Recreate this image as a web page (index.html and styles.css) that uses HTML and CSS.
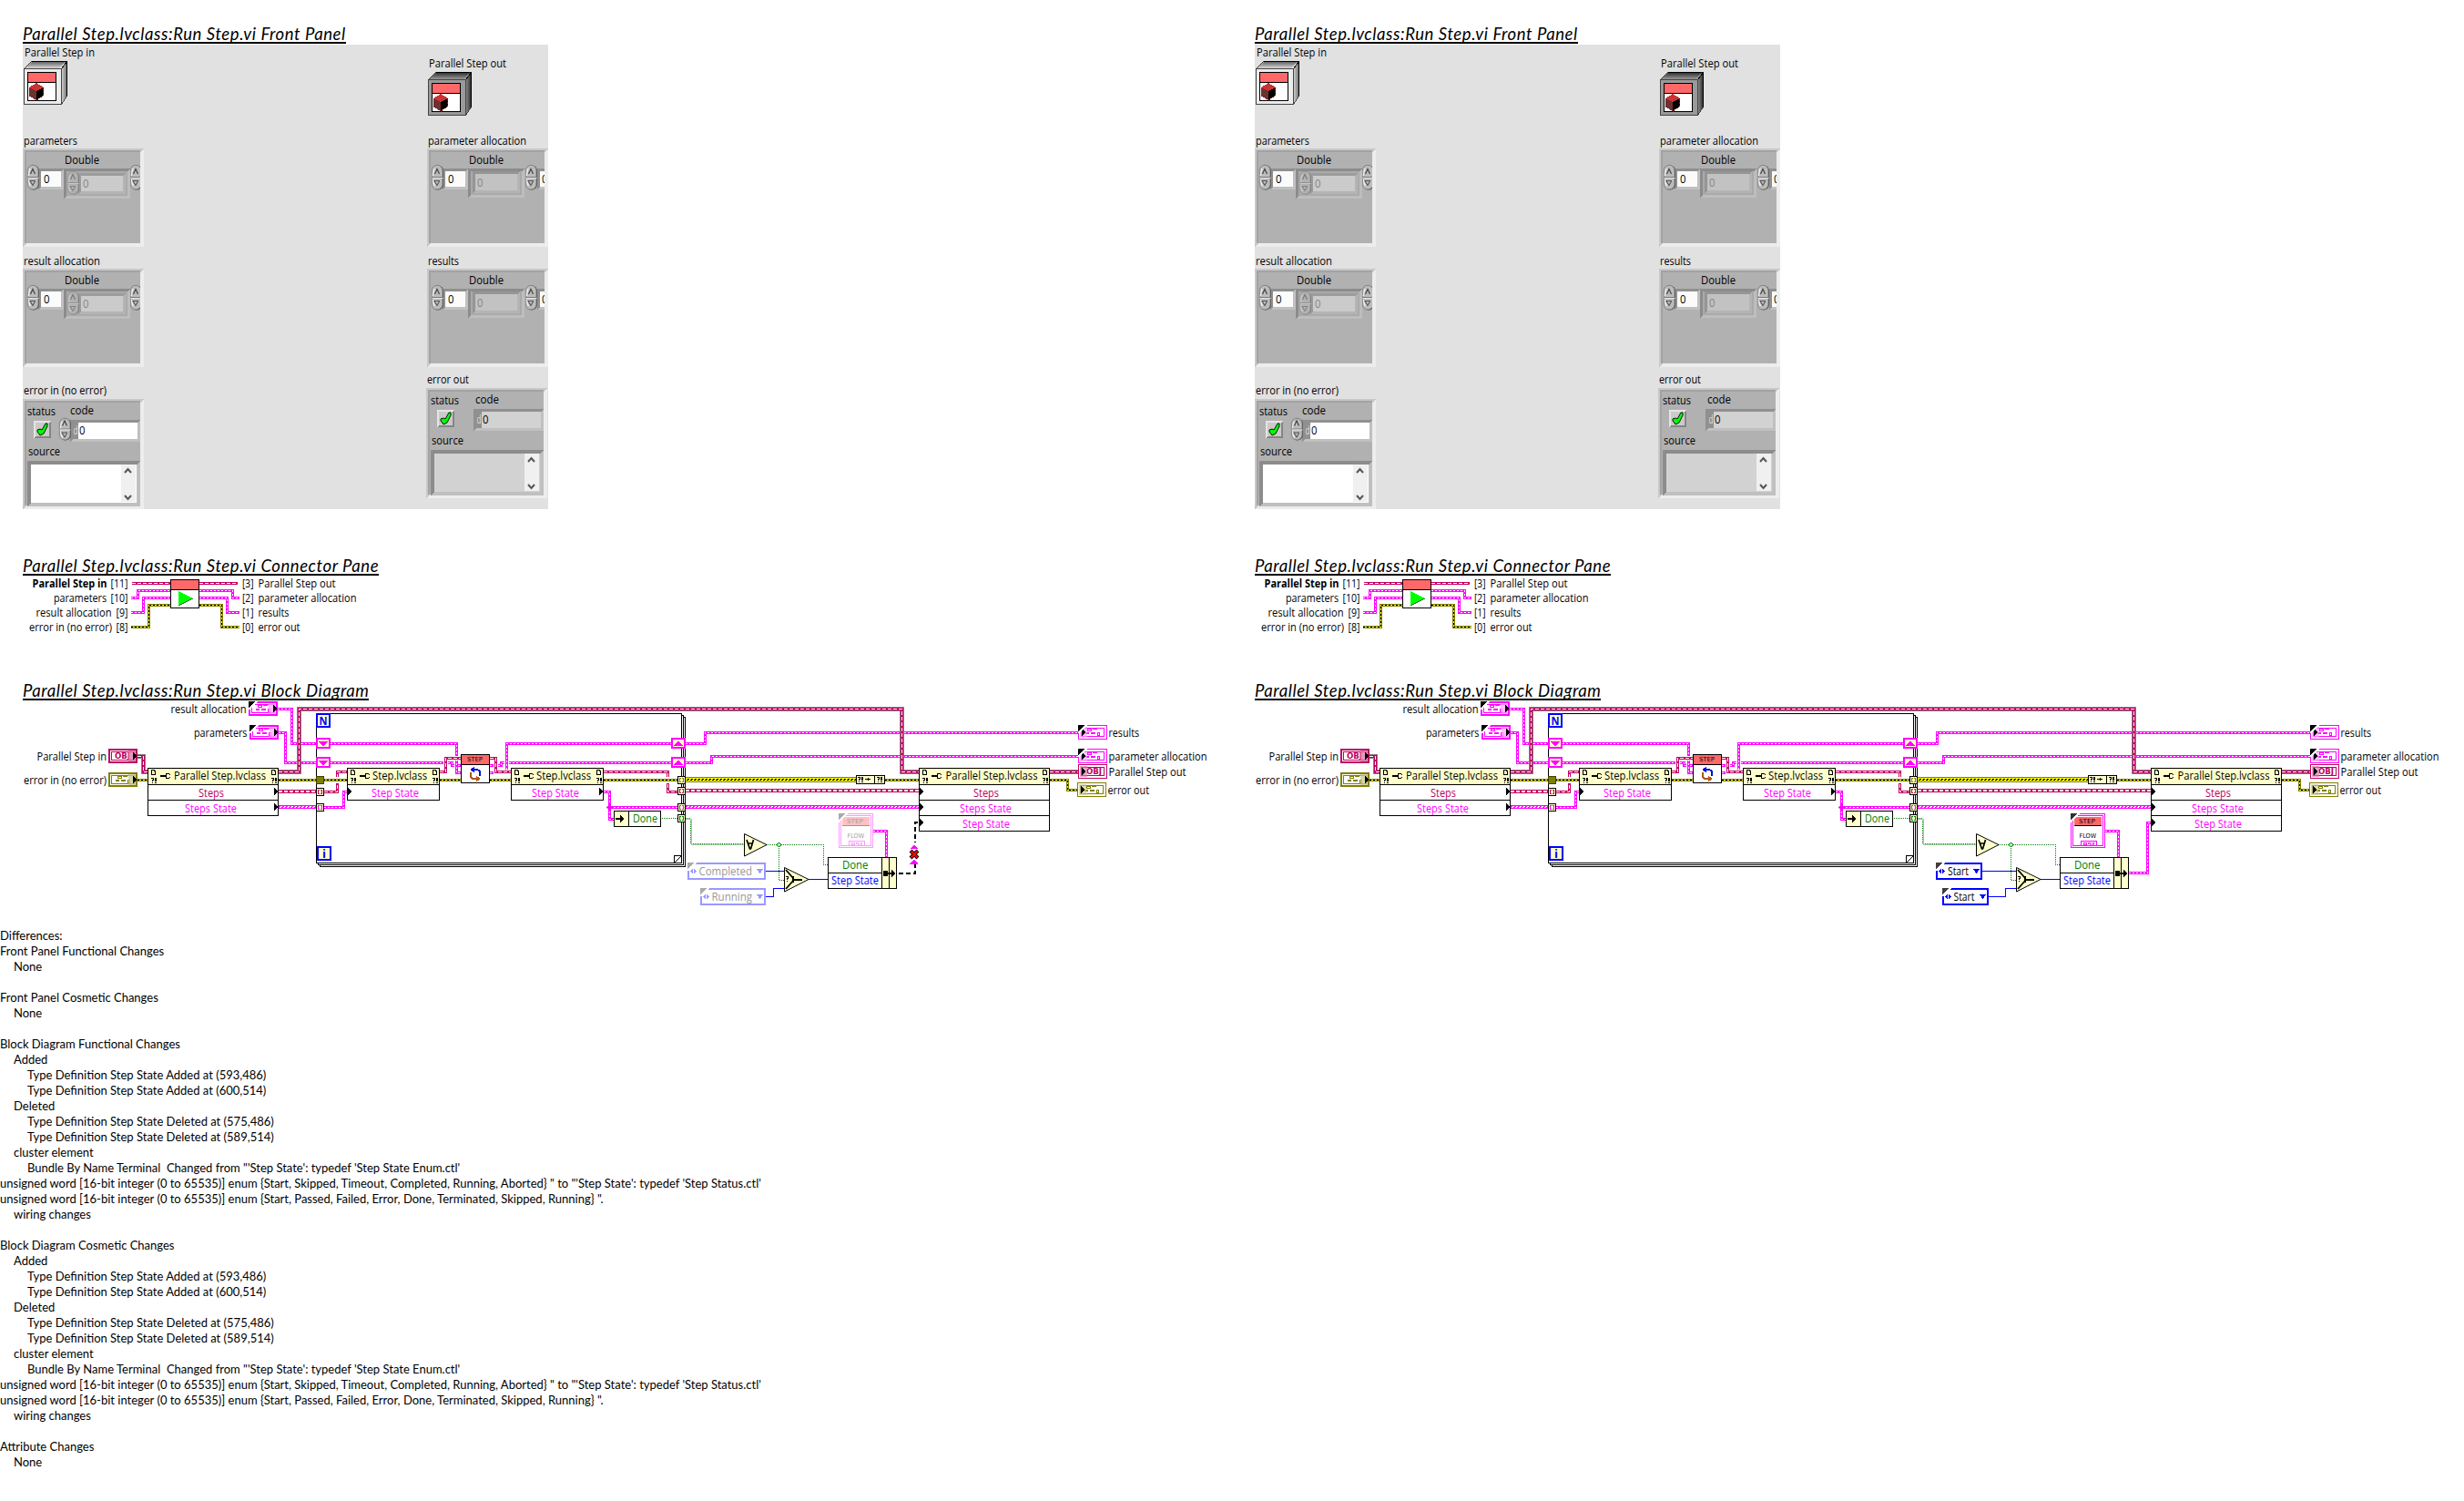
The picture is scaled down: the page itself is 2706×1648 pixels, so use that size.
FILE: index.html
```html
<!DOCTYPE html>
<html lang="en">
<head>
<meta charset="utf-8">
<title>VI comparison - Parallel Step.lvclass:Run Step.vi</title>
<link rel="stylesheet" href="styles.css">
</head>
<body>
<main class="compare">
  <section class="vi" data-version="before"></section>
  <section class="vi" data-version="after"></section>
</main>
<section class="differences">
  <p>Differences:</p>
  <p>Front Panel Functional Changes</p>
  <p class="l1">None</p>
  <p class="gap">Front Panel Cosmetic Changes</p>
  <p class="l1">None</p>
  <p class="gap">Block Diagram Functional Changes</p>
  <p class="l1">Added</p>
  <p class="l2">Type Definition Step State Added at (593,486)</p>
  <p class="l2">Type Definition Step State Added at (600,514)</p>
  <p class="l1">Deleted</p>
  <p class="l2">Type Definition Step State Deleted at (575,486)</p>
  <p class="l2">Type Definition Step State Deleted at (589,514)</p>
  <p class="l1">cluster element</p>
  <p class="l2">Bundle By Name Terminal  Changed from "'Step State': typedef 'Step State Enum.ctl'</p>
  <p>unsigned word [16-bit integer (0 to 65535)] enum {Start, Skipped, Timeout, Completed, Running, Aborted} " to "'Step State': typedef 'Step Status.ctl'</p>
  <p>unsigned word [16-bit integer (0 to 65535)] enum {Start, Passed, Failed, Error, Done, Terminated, Skipped, Running} ".</p>
  <p class="l1">wiring changes</p>
  <p class="gap">Block Diagram Cosmetic Changes</p>
  <p class="l1">Added</p>
  <p class="l2">Type Definition Step State Added at (593,486)</p>
  <p class="l2">Type Definition Step State Added at (600,514)</p>
  <p class="l1">Deleted</p>
  <p class="l2">Type Definition Step State Deleted at (575,486)</p>
  <p class="l2">Type Definition Step State Deleted at (589,514)</p>
  <p class="l1">cluster element</p>
  <p class="l2">Bundle By Name Terminal  Changed from "'Step State': typedef 'Step State Enum.ctl'</p>
  <p>unsigned word [16-bit integer (0 to 65535)] enum {Start, Skipped, Timeout, Completed, Running, Aborted} " to "'Step State': typedef 'Step Status.ctl'</p>
  <p>unsigned word [16-bit integer (0 to 65535)] enum {Start, Passed, Failed, Error, Done, Terminated, Skipped, Running} ".</p>
  <p class="l1">wiring changes</p>
  <p class="gap">Attribute Changes</p>
  <p class="l1">None</p>
</section>
<script src="script.js"></script>
</body>
</html>
```
FILE: styles.css
```css
body { margin: 0; background: #fff; color: #000; font-family: "Open Sans", "Noto Sans", sans-serif; font-size: 12px; }
.compare { display: grid; grid-template-columns: 1fr 1fr; height: 1019px; }
.vi { padding: 26px 0 0 25px; }
.vi h2 { margin: 0 0 1px; width: fit-content; height: 20px; border-bottom: 2px solid #000; font: italic 400 18.5px/22px Lato, sans-serif; white-space: nowrap; letter-spacing: 0.57px; }
.vi h2.connector-title { margin-top: 51px; }
.vi h2.diagram-title { margin-top: 40px; }
svg { display: block; shape-rendering: crispEdges; overflow: visible; }
svg text { font-family: "Open Sans", "Noto Sans", sans-serif; font-size: 12px; white-space: pre; }
svg .b { font-weight: 700; }
svg .tiny { font-family: "DejaVu Sans", sans-serif; font-size: 7px; }
svg .tinyb { font-family: "DejaVu Sans", sans-serif; font-size: 8px; font-weight: 700; }
.front-panel { display: flex; justify-content: space-between; width: 577px; height: 510px; background: #e1e1e1; }
.column { display: flex; flex-direction: column; }
.smooth { shape-rendering: auto; }
.clip { overflow: hidden; }
.w { fill: none; stroke-linejoin: miter; }
.w-pink { stroke: #f0f; stroke-width: 3; }
.w-pink-in { stroke: #fff; stroke-width: 1; stroke-dasharray: 2 2; }
.w-class { stroke: #808080; stroke-width: 5; }
.w-crim { stroke: #c00060; stroke-width: 3; }
.w-crim-in { stroke: #fff; stroke-width: 1; stroke-dasharray: 4 2; }
.w-err { stroke: #808000; stroke-width: 3; }
.w-err-y { stroke: #ff0; stroke-width: 1; }
.w-err-in { stroke: #000; stroke-width: 1; stroke-dasharray: 2 2; }
.w-crim-a { stroke: #c00060; stroke-width: 4; }
.w-crim-ain { stroke: #fff; stroke-width: 2; stroke-dasharray: 4 2; }
.w-bool { stroke: #008000; stroke-width: 1; stroke-dasharray: 1 1; }
.w-enum { stroke: #00f; stroke-width: 1; }
.w-broken { stroke: #000; stroke-width: 2; stroke-dasharray: 5 3; }
.differences { height: 612px; font: 13px/17px Lato, sans-serif; }
.differences p { margin: 0; white-space: pre; }
.differences .l1 { padding-left: 15px; }
.differences .l2 { padding-left: 30px; }
.differences .gap { margin-top: 17px; }
```
FILE: script.js
```js
const CRIM = '#c00060', PINK = '#ff00ff', OLIVE = '#808000', PALE = '#ffffcc';
const esc = s => s.replace(/&/g, '&amp;').replace(/</g, '&lt;');
const T = (x, y, w, s, fill = '#000', cls = '') =>
  `<text x="${x}" y="${y}" textLength="${w}" lengthAdjust="spacingAndGlyphs" fill="${fill}" class="${cls}">${esc(s)}</text>`;
const R = (x, y, w, h, fill, extra = '') => `<rect x="${x}" y="${y}" width="${w}" height="${h}" fill="${fill}" ${extra}/>`;
const B = (x, y, w, h, fill, stroke = '#000', sw = 1) =>
  `<rect x="${x + sw / 2}" y="${y + sw / 2}" width="${w - sw}" height="${h - sw}" fill="${fill}" stroke="${stroke}" stroke-width="${sw}"/>`;
const P = (d, fill, extra = '') => `<path d="${d}" fill="${fill}" ${extra}/>`;
const L = (d, stroke = '#000', sw = 1, extra = '') => `<path d="${d}" fill="none" stroke="${stroke}" stroke-width="${sw}" ${extra}/>`;
const svg = (x, y, w, h, body) => `<svg width="${w}" height="${h}" viewBox="${x} ${y} ${w} ${h}">${body}</svg>`;
/* Small icon bitmaps: one string per row, '#' is a set pixel. */
const px = (x, y, rows, fill = '#000') => P(rows.map((r, j) =>
  [...r.matchAll(/#+/g)].map(m => `M${x + m.index} ${y + j}h${m[0].length}v1h-${m[0].length}z`).join('')).join(''), fill);

/* Wires: each kind is a stack of strokes along the same route. */
const KINDS = {
  pink: ['w-pink', 'w-pink-in'], cls: ['w-class', 'w-crim', 'w-crim-in'], crim: ['w-crim', 'w-crim-in'],
  err: ['w-err', 'w-err-y', 'w-err-in'], crimA: ['w-crim-a', 'w-crim-ain'],
  bool: ['w-bool'], enum: ['w-enum'], broken: ['w-broken']
};
const W = (kind, d) => KINDS[kind].map(c => `<path class="w ${c}" d="${d}"/>`).join('');
const hatch = (x1, x2, y, base, mark) =>
  R(x1, y - 2, x2 - x1, 4, base) + L(Array.from({ length: Math.floor((x2 - x1) / 4) }, (_, i) =>
    `M${x1 + 1 + i * 4} ${y + .5}h2M${x1 + 2 + i * 4} ${y - .5}h2`).join(''), mark, 1);

/* ---------- Front panel ---------- */
const bevel = (x, y, w, h, t, tl, br, fill) =>
  R(x, y, w, h, fill) + P(`M${x} ${y}h${w}l${-t} ${t}H${x + t}V${y + h - t}l${-t} ${t}z`, tl) +
  P(`M${x + w} ${y + h}H${x}l${t} ${-t}H${x + w - t}V${y + t}l${t} ${-t}z`, br);
const spinner = (x, y, o = 1, h = 28) => `<g class="smooth" opacity="${o}">` +
  `<rect x="${x + 1}" y="${y + .5}" width="12" height="${h - 1}" rx="6" fill="#555"/>` +
  `<rect x="${x + .3}" y="${y + .3}" width="11.7" height="${h - 1.3}" rx="5.8" fill="#bcbcbc" stroke="#777" stroke-width=".8"/>` +
  L(`M${x + 3.2} ${y + 4}q-1.8 3-1.8 8M${x + 1.5} ${y + h / 2 + 2}q0 4 2 7`, '#eee', 1.4) +
  L(`M${x + .5} ${y + h / 2 - .5}h12`, '#777', 1) + L(`M${x + .5} ${y + h / 2 + .5}h12`, '#e8e8e8', 1) +
  L(`M${x + 3.5} ${y + h / 2 - 4}l2.5-5.5 2.5 5.5`, '#444', 1.2) + L(`M${x + 9} ${y + h / 2 + 3.5}h-6l3 5 2.5-4.5`, '#555', 1.1) + '</g>';
const cube = (x, y, face, rim) =>
  P(`M${x} ${y + 8}l9-8h39v39l-7 9H${x}z`, face) +
  `<g class="smooth">` + P(`M${x + 1} ${y + 8}l8-7h37l-7 7z`, `url(#top${rim})`) + P(`M${x + 41} ${y + 8}l6-7v38l-6 8z`, `url(#side${rim})`) + '</g>' +
  L(`M${x + .5} ${y + 8.5}l8-8h39v38l-6 9h-41zM${x + .5} ${y + 8.5}h41v39M${x + 41.5} ${y + 8.5}l6-8`, '#444') +
  L(`M${x + 8.5} ${y + .5}h39l-6 8M${x + 47.5} ${y + .5}v38`, '#000') +
  B(x + 4, y + 12, 32, 32, '#fff') + R(x + 5, y + 13, 30, 10, '#ff6868') + R(x + 5, y + 23, 30, 1, '#000') +
  P(`M${x + 6} ${y + 29}l8-5 8 5v9l-8 5-8-5z`, '#6e3030') + P(`M${x + 14} ${y + 32}l8-3v9l-8 5z`, '#000') +
  P(`M${x + 6} ${y + 29}l8-5 8 5-8 4z`, '#cc3333') + L(`M${x + 6.5} ${y + 29}v9l8 5 7-5v-9`, '#7a2020', 1, 'stroke-dasharray="2 1"');
const grads = `<defs>
  <linearGradient id="topL" x1="0" x2="0" y1="0" y2="1"><stop offset="0" stop-color="#666"/><stop offset="1" stop-color="#d8d8d8"/></linearGradient>
  <linearGradient id="sideL" x1="0" x2="1" y1="0" y2="0"><stop offset="0" stop-color="#ddd"/><stop offset="1" stop-color="#777"/></linearGradient>
  <linearGradient id="topD" x1="0" x2="0" y1="0" y2="1"><stop offset="0" stop-color="#333"/><stop offset="1" stop-color="#999"/></linearGradient>
  <linearGradient id="sideD" x1="0" x2="1" y1="0" y2="0"><stop offset="0" stop-color="#999"/><stop offset="1" stop-color="#333"/></linearGradient></defs>`;
const shell = (x, y, w, h) => bevel(x, y, w, h, 4, '#c8c8c8', '#ededed', '#b1b1b1') + bevel(x + 2, y + 2, w - 6, h - 6, 2, '#a2a2a2', '#b1b1b1', '#b1b1b1');
const arrayIn = (label, w) => svg(25, 149, 134, 132, T(26, 159, w, label) + shell(25, 163, 133, 108) + T(71, 180, 38, 'Double') +
  bevel(42, 185, 28, 23, 3, '#909090', '#c0c0c0', '#fbfbfb') + T(48, 201, 6.5, '0') + spinner(30, 181) +
  bevel(70, 185, 73, 33, 3, '#8c8c8c', '#bdbdbd', '#aaa') + bevel(86, 190, 52, 23, 3, '#9c9c9c', '#b4b4b4', '#cbcbcb') +
  T(91, 206, 6.5, '0', '#858585') + spinner(74, 188, .45, 26) +
  `<svg class="clip" x="143" y="181" width="11" height="28" viewBox="143 181 11 28">${spinner(143, 181)}</svg>`);
const arrayOut = (label, w) => svg(468, 149, 134, 132, T(470, 159, w, label) + shell(469, 163, 133, 108) + T(515, 180, 38, 'Double') +
  bevel(486, 185, 28, 23, 3, '#909090', '#c0c0c0', '#fbfbfb') + T(492, 201, 6.5, '0') + spinner(474, 181) +
  bevel(514, 185, 62, 32, 3, '#8c8c8c', '#bdbdbd', '#aaa') + bevel(519, 188, 52, 24, 3, '#959595', '#b4b4b4', '#c2c2c2') +
  T(524, 205, 6.5, '0', '#858585') +
  `<svg class="clip" x="577" y="181" width="21" height="28" viewBox="577 181 21 28">${bevel(590, 185, 28, 23, 3, '#909090', '#c0c0c0', '#fbfbfb')}${T(595, 201, 6.5, '0')}${spinner(577, 181)}</svg>`);
const errorBox = (x, y, input, label, w) => {
  const field = input ? '#fff' : '#d2d2d2', fy = y + 23;
  return T(x + 1, y - 5, w, label) + shell(x, y, 133, 121) + T(x + 5, y + 18, 31, 'status') + T(x + (input ? 52 : 54), y + 17, 26, 'code') +
    bevel(x + 12, y + 24, 19, 19, 2, '#e4e4e4', '#858585', '#cacaca') +
    P(`M${x + 16} ${y + 34}l3-1 2 1 4-7h2v3l-4 8-4 2-3-4z`, '#00ff00', 'stroke="#111" stroke-width="1" class="smooth"') +
    bevel(x + 52, fy, 77, 24, 3, '#909090', '#c0c0c0', field) + R(x + 55, fy + 3, 6, 18, '#909090') +
    T(x + 55.5, fy + 16, 5, 'd', '#ddd') + T(x + 62, fy + 16, 6.5, '0') +
    (input ? spinner(x + 40, y + 21, 1, 25) : '') + T(x + 6, y + 62, 35, 'source') +
    bevel(x + 5, y + 68, 124, 50, 4, '#8c8c8c', '#c0c0c0', field) + R(x + 108, y + 72, 16, 41, '#f0f0f0') +
    L(`M${x + 112} ${y + 81}l3.5-4 3.5 4M${x + 112} ${y + 106}l3.5 4 3.5-4`, '#555', 2, 'class="smooth"');
};
const frontPanel = () => `<div class="front-panel"><div class="column">` +
  svg(25, 49, 134, 100, grads + T(27, 62, 77, 'Parallel Step in') + cube(26, 67, '#ececec', 'L')) +
  arrayIn('parameters', 59) + arrayIn('result allocation', 84) + svg(25, 413, 134, 146, errorBox(25, 438, true, 'error in (no error)', 91)) +
  `</div><div class="column">` +
  svg(468, 49, 134, 100, T(471, 74, 85, 'Parallel Step out') + cube(470, 79, '#9a9a9a', 'D')) +
  arrayOut('parameter allocation', 108) + arrayOut('results', 34) + svg(468, 413, 134, 146, errorBox(468, 426, false, 'error out', 46)) + '</div></div>';

/* ---------- Connector pane ---------- */
const connector = () => svg(25, 633, 577, 74,
  W('crim', 'M145 640.5H187') + W('crim', 'M219 640.5H261') +
  W('pink', 'M144 656.5H151.5V648.5H187') + W('pink', 'M144 672.5H157.5V656.5H187') + W('err', 'M144 688.5H163.5V664.5H187') +
  W('pink', 'M219 648.5H255.5V656.5H263') + W('pink', 'M219 656.5H249.5V672.5H263') + W('err', 'M219 664.5H243.5V688.5H263') +
  B(187, 636, 32, 32, '#fff') + R(188, 637, 30, 10, '#ff6868') + R(188, 647, 30, 1, '#000') +
  P('M196 649l16 8-16 8z', '#00ff00') + L('M196 665l16-8', '#108010', 1) +
  T(35.5, 645, 82, 'Parallel Step in', '#000', 'b') + T(121.5, 645, 19, '[11]') +
  T(59, 661, 58, 'parameters') + T(121.5, 661, 19, '[10]') + T(39.5, 677, 83, 'result allocation') + T(127.5, 677, 13, '[9]') +
  T(32, 693, 91, 'error in (no error)') + T(127.5, 693, 13, '[8]') +
  T(266, 645, 12.5, '[3]') + T(283.5, 645, 85, 'Parallel Step out') + T(266, 661, 12.5, '[2]') + T(283.5, 661, 108, 'parameter allocation') +
  T(266, 677, 12.5, '[1]') + T(283.5, 677, 34, 'results') + T(266, 693, 12.5, '[0]') + T(283.5, 693, 46, 'error out'));

/* ---------- Block diagram ---------- */
const glyph = (x, y, c) => px(x, y, ['..#####.#####...', '..#...#.........', '..#####.........', '................', '####..#####..###', '####..#####..#.#', '.............#.#', '.............###'], c);
const terminal = (x, y, c, input, obj, tri) => {
  const sw = input ? 2 : 1, tint = c === PINK ? '#ffaaff' : c === OLIVE ? '#c8c890' : '#dd77aa';
  return B(x, y, 32, 16, '#fff', c, sw) + B(x + 3, y + 3, 26, 10, '#fff', c, 1) +
    (obj ? T(x + (input ? 7 : 9), y + 11, 17, 'OBJ', c, 'tinyb') : glyph(x + 8, y + 4, c)) +
    (input ? R(x + 22, y + 2, 8, 12, tint, 'opacity=".75"') + P(`M${x + 27} ${y + 4}l4 4-4 4z`, '#000')
      : R(x + 2, y + 2, 8, 12, tint, 'opacity=".65"') + P(`M${x + 4} ${y + 4}l4 4-4 4z`, '#000')) +
    (tri ? P(`M${x} ${y}h8l-8 8z`, '#000') + L(`M${x} ${y + 9}l9-9`, '#fff', 1.5) : '');
};
const err = (x, y) => px(x, y, ['###.##', '..#.##', '.##.##', '.#..##', '......', '.#..##']);
const marks = (x, y) => px(x, y, ['####.', '#..##', '#...#', '#...#', '#...#', '#####']) + err(x, y + 9);
const wrench = (x, y) => px(x, y, ['......####.', '......#...#', '#######....', '#######....', '......#...#', '......####.']);
const arrow = (x, y) => P(`M${x} ${y - 4}l4 4-4 4z`, '#000');
const node = (x, w, title, tx, tw, rows) => R(x, 843, w, 19 + rows.length * 17 - 1, '#fff') + B(x, 843, w, 19, PALE) +
  marks(x + 4, 845) + marks(x + w - 8, 845) + wrench(x + 14, 849) + T(tx, 856, tw, title) +
  rows.map((r, i) => B(x, 861 + i * 17, w, 18, '#fff') + T(r[1], 874.5 + i * 17, r[2], r[0], r[3]) +
    arrow(r[4] === 'in' ? x + 1 : x + w - 5, 869 + i * 17)).join('');
const tunnel = (x, y, c) => B(x, y, 9, 9, PALE) + px(x + 2, y + 2, ['##.##', '#...#', '#...#', '#...#', '##.##'], c);
const shift = (x, y, up) => B(x, y, 16, 12, PALE, PINK, 2) +
  px(x + 3, y + 4, up ? ['....##....', '...####...', '..######..', '.########.', '##########'] : ['##########', '.########.', '..######..', '...####...', '....##....'], PINK);
const constant = (x, y, w, c, text, tx, tw, tc, ear) => B(x, y, w, 19, '#fff', c, 2) + P(`M${x} ${y}h8l-8 8z`, ear) +
  L(`M${x} ${y + 9}l9-9`, '#fff', 1.5) + P(`M${x + 3} ${y + 9.5}l3-3v6zM${x + 10} ${y + 9.5}l-3-3v6z`, c) +
  T(tx, y + 14, tw, text, tc) + P(`M${x + w - 10} ${y + 7}h7l-3.5 5z`, c);

const diagram = after => {
  const s = [];
  s.push(W('pink', 'M305 778.5H320.5V816.5H347'), W('pink', 'M306 804.5H313.5V837.5H347'),
    W('pink', 'M753 816.5H774.5V804.5H1184'), W('pink', 'M753 837.5H781.5V830.5H1184'),
    W('cls', 'M151 830.5H157.5V847.5H162'), W('cls', 'M306 847.5H328.5V778.5H990.5V847.5H1009'), W('cls', 'M1153 847.5H1184'),
    W('err', 'M151 856.5H162'), W('err', 'M306 856.5H347'), W('crimA', 'M306 869H347'), hatch(306, 347, 886, PINK, '#fff'));
  /* for loop */
  s.push(L('M351 951.5H752.5V787.5H751M349 949.5H750.5V785.5H749M349.5 948v2M351.5 950v2'), L('M347.5 783.5H748.5V947.5H347.5z'),
    L('M740.5 947V939.5H748.5M740.5 947.5l8-8'));
  s.push(W('pink', 'M363 816.5H501.5V848.5H506'), W('pink', 'M363 837.5H487'), W('pink', 'M492 837.5H496.5V840.5H499'), W('pink', 'M503 840.5H506'),
    W('crim', 'M356 869.5H370.5V847.5H381'), R(368, 853, 5, 7, '#fff'), W('pink', 'M356 886.5H377V869.5H381'), W('err', 'M355 856.5H381'),
    R(499, 830, 5, 5, '#fff'), W('crim', 'M483 847.5H489.5V832.5H506'), W('err', 'M483 856.5H506'), W('err', 'M538 856.5H561'), W('crim', 'M538 832.5H544.5V847.5H561'),
    W('pink', 'M538 840.5H542'), W('pink', 'M538 848.5H542'), W('pink', 'M547 840.5H550.5V837.5H554'), W('pink', 'M556.5 845V816.5H737'), W('pink', 'M559 837.5H737'),
    W('crim', 'M663 847.5H733.5V869.5H744'), R(731, 853, 5, 7, '#fff'), W('err', 'M663 856.5H744'),
    W('pink', 'M663 869.5H669.5V899.5H674'), W('pink', 'M669.5 886.5H744'), P('M666 886.5l3.5-3.5 3.5 3.5-3.5 3.5z', PINK),
    W('bool', 'M727 898.5H744'));
  s.push(B(347, 783, 16, 16, PALE, '#0000ff', 2), T(350.5, 795.5, 9, 'N', '#00f', 'b'), B(348, 929, 16, 16, PALE, '#0000ff', 2), T(354, 941.5, 4, 'i', '#00f', 'b'),
    shift(347, 810, false), shift(347, 831, false), shift(737, 810, true), shift(737, 831, true),
    B(347, 852, 9, 9, OLIVE, '#404000'), tunnel(347, 865, CRIM), tunnel(347, 882, PINK));
  s.push(node(162, 144, 'Parallel Step.lvclass', 191, 101, [['Steps', 218, 28, CRIM], ['Steps State', 203, 57, PINK]]),
    node(381, 102, 'Step.lvclass', 409, 60, [['Step State', 408, 52, PINK, 'in']]),
    node(561, 102, 'Step.lvclass', 589, 60, [['Step State', 584, 52, PINK]]));
  s.push(B(506, 828, 32, 32, '#fff'), R(507, 829, 30, 10, '#ff6868'), R(507, 839, 30, 1, '#000'), T(513, 836, 17, 'STEP', '#000', 'tiny'),
    L('M520 845h4.5l2.5 2v5', '#0010d0', 2), P('M516.5 845l4.5-3.5v7z', '#0010d0'), L('M517 848v5l2 2h5', '#b05810', 2), P('M527.5 855l-4.5-3.5v7z', '#b05810'));
  s.push(B(674, 890, 52, 18, '#fff'), B(674, 890, 17, 18, PALE), R(676, 898, 7, 2, '#000'), P('M681 895l4 4-4 4z', '#000'), T(695, 903, 27, 'Done', '#008000'));
  /* right of the loop */
  s.push(hatch(753, 941, 856, '#ffff00', '#000'), L('M753 853.5H940M753 858.5H940', OLIVE), W('crimA', 'M753 868H1009'), hatch(753, 1009, 886, PINK, '#fff'),
    tunnel(744, 852, OLIVE), tunnel(744, 864, CRIM), tunnel(744, 882, PINK), tunnel(744, 894, '#008000'));
  s.push(B(940, 851, 32, 10, PALE), L('M960.5 851v10'), err(942, 853), px(950, 854, ['...#..', '######', '...#..']), err(963, 853), W('err', 'M972 856.5H1009'),
    W('err', 'M1153 856.5H1172.5V867.5H1184'));
  s.push(L('M753 898.5H758.5V927H817', '#008000', 2, 'stroke-dasharray="1 1"'), L('M753 899.5H759.5V927.5H817', '#9c9', 1),
    W('bool', 'M842 927.5H904.5V949.5H909'), W('bool', 'M855.5 929V966.5H861'));
  s.push(P('M817.5 915.5L842 927.5L817.5 940z', PALE, 'stroke="#000" class="smooth"'), L('M820 922l3.5 10h1l3-10M821.5 926h5', '#000', 1.7, 'class="smooth"'),
    '<circle class="smooth" cx="855.5" cy="927.5" r="2" fill="#cfc" stroke="#008000"/>');
  if (after) s.push(constant(773, 947, 51, '#0000ff', 'Start', 786, 23, '#000', '#404040'), constant(780, 975, 51, '#0000ff', 'Start', 792.5, 23, '#000', '#404040'),
    W('enum', 'M824 956.5H861'), W('enum', 'M831 984.5H849.5V975.5H861'));
  else s.push(constant(755, 947, 86, '#9999ff', 'Completed', 767.5, 58.5, '#999', '#aaa'), constant(769, 975, 72, '#9999ff', 'Running', 781.5, 44.5, '#999', '#aaa'),
    W('enum', 'M841 956.5H861'), W('enum', 'M841 984.5H849V975.5H861'));
  s.push(W('enum', 'M888 965.5H909'), P('M861.5 952.5L888 965.5L861.5 979z', PALE, 'stroke="#000" class="smooth"'),
    L('M863 955l8 9M863 976l8-9', '#000', 1.8, 'class="smooth"'), L('M870 966h11', '#000', 2), R(870, 962, 2, 7, '#000'), px(863, 962, ['###', '..#', '.##', '.#.', '...', '.#.']));
  s.push(B(909, 941, 76, 35, PALE), R(910, 942, 58, 33, '#fff'), L('M909 958.5H968M968.5 941V976M976.5 941V976'),
    T(925, 954, 28.5, 'Done', '#008000'), T(913, 971, 52, 'Step State', '#00f'), R(970, 956, 5, 6, '#000'), R(972, 958, 8, 2, '#000'), P('M979 955l4 4-4 4z', '#000'));
  s.push(`<g opacity="${after ? 1 : .4}">` + B(921, 893, 38, 38, '#fff', PINK, 1) + B(923, 895, 34, 34, '#fff', PINK, 1) + R(925, 897, 30, 9, '#ff6868') + R(925, 906, 30, 1, '#000') +
    T(930, 904, 18, 'STEP', '#000', 'tiny') + T(930.5, 920, 18.5, 'FLOW', '#000', 'tiny') + L('M932.5 929V923.5H949.5V929', PINK) + px(935, 925, ['####.###..##', '#..#.#.#.#.#', '####...#.#.#', '...#.###.###'], PINK) +
    P('M921 893h8l-8 8z', '#303030') + L('M920 903l10-10', '#fff', 1.5) + '</g>', W('pink', 'M959 912.5H973.5V941'));
  s.push(node(1009, 144, 'Parallel Step.lvclass', 1038.5, 101, [['Steps', 1069, 28, CRIM, 'in'], ['Steps State', 1054, 57, PINK, 'in'], ['Step State', 1057, 52, PINK, 'in']]));
  if (after) s.push(W('pink', 'M985 958.5H1005.5V903.5H1009'));
  else s.push(W('broken', 'M987 959H1005V903H1009'), R(1000, 925, 9, 24, '#fff'), P('M1004 927l4.5 5h-9zM1004 943.5l4.5 5h-9z', PINK),
    L('M1000 934l8 8M1008 934l-8 8', '#000', 4, 'class="smooth"'), L('M1000.5 934.5l7 7M1007.5 934.5l-7 7', '#f00', 2.2, 'class="smooth"'));
  s.push(terminal(273, 770, PINK, true, false, true), terminal(274, 796, PINK, true, false, true), terminal(119, 822, CRIM, true, true), terminal(119, 848, OLIVE, true),
    terminal(1184, 796, PINK, false, false, true), terminal(1184, 822, PINK, false, false, true), terminal(1184, 839, CRIM, false, true), terminal(1183, 859, OLIVE, false));
  s.push(T(187.5, 783, 83, 'result allocation'), T(213, 809, 58.5, 'parameters'), T(40.5, 835, 76.5, 'Parallel Step in'), T(26, 861, 91, 'error in (no error)'),
    T(1217.5, 809, 33.5, 'results'), T(1217.5, 835, 108, 'parameter allocation'), T(1217.5, 852, 85, 'Parallel Step out'), T(1216.5, 872, 45.5, 'error out'));
  return svg(25, 770, 1328, 230, s.join(''));
};

document.querySelectorAll('.vi').forEach(el => {
  el.innerHTML = `<h2>Parallel Step.lvclass:Run Step.vi Front Panel</h2>${frontPanel()}` +
    `<h2 class="connector-title">Parallel Step.lvclass:Run Step.vi Connector Pane</h2>${connector()}` +
    `<h2 class="diagram-title">Parallel Step.lvclass:Run Step.vi Block Diagram</h2>${diagram(el.dataset.version === 'after')}`;
});
```
